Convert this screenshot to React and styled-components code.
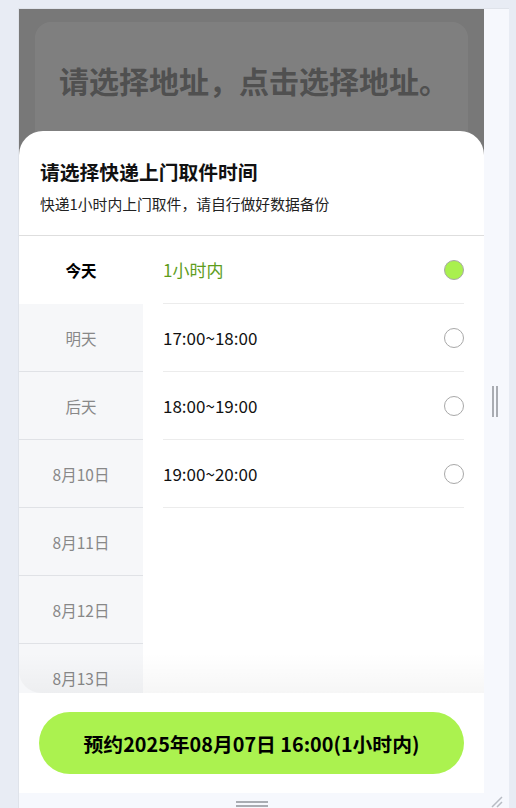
import React, { useState } from "react";
import styled, { createGlobalStyle } from "styled-components";

const GlobalStyle = createGlobalStyle`
  html, body {
    margin: 0;
    padding: 0;
    background: #e8ecf4;
    font-family: "Noto Sans CJK SC", "Noto Sans", sans-serif;
  }
  * { box-sizing: border-box; }
`;

const days = ["今天", "明天", "后天", "8月10日", "8月11日", "8月12日", "8月13日"];
const slots = ["1小时内", "17:00~18:00", "18:00~19:00", "19:00~20:00"];

export default function App() {
  const [day, setDay] = useState(0);
  const [slot, setSlot] = useState(0);

  return (
    <>
      <GlobalStyle />
      <Shell>
        <Frame>
          <Page>
            <AddressCard>请选择地址，点击选择地址。</AddressCard>
          </Page>
          <Overlay>
            <Sheet>
              <Header>
                <h1>请选择快递上门取件时间</h1>
                <p>快递1小时内上门取件，请自行做好数据备份</p>
              </Header>
              <Body>
                <DayList>
                  {days.map((d, i) => (
                    <DayItem key={d} $active={i === day} onClick={() => setDay(i)}>
                      {d}
                    </DayItem>
                  ))}
                </DayList>
                <SlotList>
                  {slots.map((s, i) => (
                    <SlotRow key={s} $active={i === slot} onClick={() => setSlot(i)}>
                      <span>{s}</span>
                      <Radio $checked={i === slot} />
                    </SlotRow>
                  ))}
                </SlotList>
                <Fade />
              </Body>
              <Footer>
                <ConfirmBtn>预约2025年08月07日 16:00(1小时内)</ConfirmBtn>
              </Footer>
            </Sheet>
          </Overlay>
        </Frame>
        <SideHandle>
          <i />
          <i />
        </SideHandle>
        <BottomHandle>
          <i />
          <i />
        </BottomHandle>
        <Corner />
        <Grip width="14" height="14" viewBox="0 0 14 14">
          <path d="M13 3 L3 13 M13 8 L8 13" stroke="#b8bcc4" strokeWidth="1.5" />
        </Grip>
      </Shell>
    </>
  );
}

const Shell = styled.div`
  position: relative;
  margin: 8px 0 0 18px;
  width: 491px;
  height: 800px;
  background: #f6f8fd;
  border-top: 1px solid #dfe3ea;
  border-left: 1px solid #dfe3ea;
  display: grid;
  grid-template-columns: 465px 25px;
  grid-template-rows: 784px 15px;
  overflow: hidden;
`;

const Frame = styled.div`
  position: relative;
  background: #f0f0f0;
  overflow: hidden;
`;

const Page = styled.div`
  padding: 13px 16px;
`;

const AddressCard = styled.div`
  background: #ffffff;
  border-radius: 16px;
  height: 140px;
  padding: 30px 0 0 24px;
  font-size: 30px;
  font-weight: 700;
  color: #a0a0a0;
  line-height: 56px;
`;

const Overlay = styled.div`
  position: absolute;
  inset: 0;
  background: rgba(0, 0, 0, 0.5);
  display: flex;
  flex-direction: column;
  justify-content: flex-end;
`;

const Sheet = styled.div`
  height: 662px;
  background: #ffffff;
  border-radius: 24px 24px 0 0;
  display: flex;
  flex-direction: column;
  overflow: hidden;
`;

const Header = styled.div`
  padding: 28px 21px 21px;
  border-bottom: 1px solid #dedede;

  h1 {
    margin: 0;
    font-size: 19.8px;
    line-height: 26px;
    font-weight: 700;
    color: #111111;
  }
  p {
    margin: 9px 0 0;
    font-size: 14.8px;
    line-height: 20px;
    color: #222222;
  }
`;

const Body = styled.div`
  position: relative;
  flex: 1;
  display: flex;
  overflow: hidden;
`;

const DayList = styled.div`
  width: 124px;
  background: #f6f7f9;
  display: flex;
  flex-direction: column;
`;

const DayItem = styled.div`
  height: 68px;
  flex-shrink: 0;
  display: flex;
  align-items: center;
  justify-content: center;
  font-size: 15.5px;
  cursor: pointer;
  color: ${({ $active }) => ($active ? "#000000" : "#888888")};
  font-weight: ${({ $active }) => ($active ? 700 : 400)};
  background: ${({ $active }) => ($active ? "#ffffff" : "transparent")};
  border-bottom: 1px solid ${({ $active }) => ($active ? "transparent" : "#e0e2e6")};
`;

const SlotList = styled.div`
  flex: 1;
  padding: 0 20px;
`;

const SlotRow = styled.div`
  height: 68px;
  display: flex;
  align-items: center;
  justify-content: space-between;
  border-bottom: 1px solid #ececec;
  cursor: pointer;

  span {
    font-size: 17px;
    color: ${({ $active }) => ($active ? "#5e9d1c" : "#111111")};
  }
`;

const Radio = styled.div`
  width: 20px;
  height: 20px;
  border-radius: 50%;
  border: 1px solid #a8a8a8;
  background: ${({ $checked }) => ($checked ? "#a9f04e" : "#ffffff")};
`;

const Fade = styled.div`
  position: absolute;
  left: 0;
  right: 0;
  bottom: 0;
  height: 40px;
  pointer-events: none;
  border-radius: 0 0 0 22px;
  background: linear-gradient(rgba(0, 0, 0, 0), rgba(0, 0, 0, 0.035));
`;

const Footer = styled.div`
  height: 100px;
  padding: 19px 20px 0;
  background: #ffffff;
`;

const ConfirmBtn = styled.button`
  width: 100%;
  height: 62px;
  border: none;
  border-radius: 31px;
  background: #abf24f;
  font-family: inherit;
  font-size: 19.8px;
  font-weight: 700;
  color: #000000;
  cursor: pointer;
`;

const SideHandle = styled.div`
  display: flex;
  align-items: center;
  justify-content: center;
  gap: 2px;
  padding-right: 4px;

  i {
    width: 2px;
    height: 31px;
    background: #a9acb2;
  }
`;

const BottomHandle = styled.div`
  display: flex;
  flex-direction: column;
  align-items: center;
  justify-content: flex-end;
  gap: 2px;
  padding-bottom: 1px;

  i {
    width: 32px;
    height: 2px;
    background: #a9acb2;
  }
`;

const Corner = styled.div``;

const Grip = styled.svg`
  position: absolute;
  right: 6px;
  bottom: 0;
`;
